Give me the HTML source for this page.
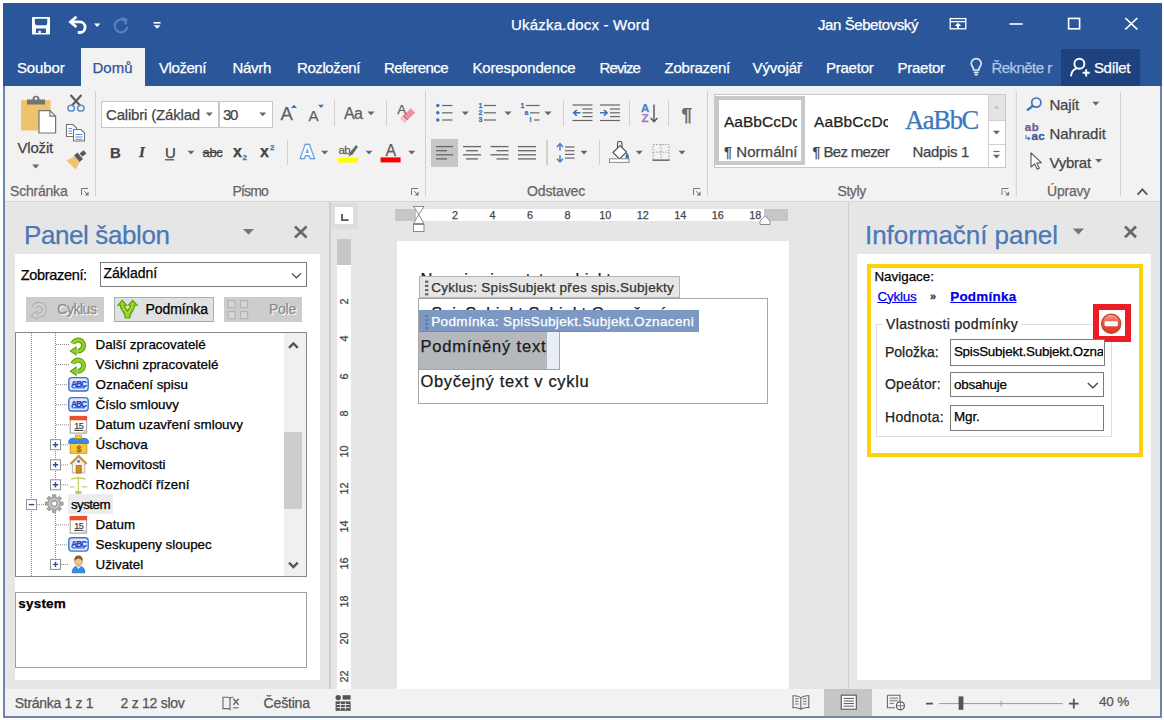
<!DOCTYPE html>
<html lang="cs"><head><meta charset="utf-8"><title>Ukázka.docx - Word</title>
<style>
html,body{margin:0;padding:0;background:#fff;}
body{width:1164px;height:720px;overflow:hidden;position:relative;font-family:"Liberation Sans",sans-serif;}
.a{position:absolute;box-sizing:border-box;}
.t{position:absolute;white-space:pre;-webkit-text-stroke:0.25px currentColor;}
svg{overflow:visible;}
</style></head>
<body>
<div class="a" style="left:3.2px;top:3px;width:1158.7px;height:714.7px;background:#6b85ad;"></div>
<div class="a" style="left:3.2px;top:3px;width:1158.7px;height:83px;background:#2b579a;"></div>
<div class="a" style="left:5.1px;top:86px;width:1154.9px;height:116px;background:#f2f2f2;"></div>
<div class="a" style="left:5.1px;top:201px;width:1154.9px;height:1px;background:#d6d6d6;"></div>
<div class="a" style="left:5.1px;top:202px;width:1154.9px;height:487px;background:#e6e6e6;"></div>
<div class="a" style="left:5.1px;top:689px;width:1154.9px;height:26.8px;background:#f2f2f2;"></div>
<div class="a" style="left:81px;top:48px;width:64px;height:38px;background:#f2f2f2;"></div>
<div class="a" style="left:1061px;top:48.5px;width:79px;height:37.5px;background:#1d427d;"></div>
<svg class="a" style="left:0;top:0" width="1164" height="720" viewBox="0 0 1164 720">
<rect x="32" y="17" width="18" height="17.5" rx="1" fill="#fff"/><path d="M34.8,18.8 H47.3 V23 L46.4,25.2 H35.9 L34.8,23 Z" fill="#2b579a"/><path d="M35.9,28.6 H45.9 V32.9 H40.8 V30.8 H38.3 V32.9 H35.9 Z" fill="#2b579a"/>
<g fill="none" stroke="#fff" stroke-width="2.8"><path d="M71,21.9 H79.8 A5.3,5.3 0 0 1 79.8,32.5 H77.8"/><path d="M76.4,16.8 L70.4,21.9 L76.4,27"/></g>
<polygon points="94,23.6 100.4,23.6 97.2,27" fill="#fff"/>
<g fill="none" stroke="#5d81c0" stroke-width="2.2"><path d="M125.2,21 A6.4,6.4 0 1 0 127.4,26.8"/><path d="M121.4,18.2 L126.2,19.6 L125.4,24.6" /></g>
<rect x="153.6" y="22" width="7" height="1.6" fill="#fff" />
<polygon points="153.6,25.2 160.6,25.2 157.1,28.8" fill="#fff"/>
<g fill="none" stroke="#fff" stroke-width="1.3"><rect x="950.2" y="18.6" width="15.6" height="10.2"/><line x1="950.2" y1="21.6" x2="965.8" y2="21.6"/></g>
<path d="M958,22.8 L961.2,26 H959 V28 H957 V26 H954.8 Z" fill="#fff"/>
<line x1="1009.5" y1="24" x2="1022.6" y2="24" stroke="#fff" stroke-width="1.6" />
<rect x="1068.6" y="18.4" width="11" height="10.4" fill="none" stroke="#fff" stroke-width="1.6" />
<path d="M1125.3,18 L1137.3,29.4 M1137.3,18 L1125.3,29.4" stroke="#fff" stroke-width="1.6" fill="none"/>
<g fill="none" stroke="#dfe7f4" stroke-width="1.7"><path d="M973.6,70 C973.6,67 971.2,66.2 971.2,63.6 A5,5 0 0 1 981.2,63.6 C981.2,66.2 978.8,67 978.8,70 Z"/><line x1="973.8" y1="72.4" x2="978.6" y2="72.4"/><line x1="974.6" y1="74.6" x2="977.8" y2="74.6"/></g>
<g fill="none" stroke="#fff" stroke-width="1.9"><circle cx="1079.4" cy="63.8" r="5"/><path d="M1071,76.4 C1071.4,71.6 1074,69.2 1076.6,68.4"/><path d="M1082.6,72.8 H1089.8 M1086.2,69.2 V76.4"/></g>
</svg>
<span class="t" style="left:511px;top:16.90px;font:15px/1 'Liberation Sans',sans-serif;color:#ffffff;letter-spacing:0.207px;">Ukázka.docx - Word</span>
<span class="t" style="left:818px;top:17.00px;font:15px/1 'Liberation Sans',sans-serif;color:#ffffff;letter-spacing:-0.421px;">Jan Šebetovský</span>
<span class="t" style="left:17px;top:59.90px;font:15px/1 'Liberation Sans',sans-serif;color:#ffffff;letter-spacing:-0.145px;">Soubor</span>
<span class="t" style="left:92.5px;top:59.90px;font:15px/1 'Liberation Sans',sans-serif;color:#2b579a;letter-spacing:-0.003px;">Domů</span>
<span class="t" style="left:159px;top:59.90px;font:15px/1 'Liberation Sans',sans-serif;color:#ffffff;letter-spacing:-0.433px;">Vložení</span>
<span class="t" style="left:232.5px;top:59.90px;font:15px/1 'Liberation Sans',sans-serif;color:#ffffff;letter-spacing:-0.303px;">Návrh</span>
<span class="t" style="left:297px;top:59.90px;font:15px/1 'Liberation Sans',sans-serif;color:#ffffff;letter-spacing:-0.411px;">Rozložení</span>
<span class="t" style="left:384px;top:59.90px;font:15px/1 'Liberation Sans',sans-serif;color:#ffffff;letter-spacing:-0.579px;">Reference</span>
<span class="t" style="left:472.5px;top:59.90px;font:15px/1 'Liberation Sans',sans-serif;color:#ffffff;letter-spacing:-0.160px;">Korespondence</span>
<span class="t" style="left:599.5px;top:59.90px;font:15px/1 'Liberation Sans',sans-serif;color:#ffffff;letter-spacing:-0.892px;">Revize</span>
<span class="t" style="left:664.5px;top:59.90px;font:15px/1 'Liberation Sans',sans-serif;color:#ffffff;letter-spacing:-0.226px;">Zobrazení</span>
<span class="t" style="left:752.5px;top:59.90px;font:15px/1 'Liberation Sans',sans-serif;color:#ffffff;letter-spacing:-0.074px;">Vývojář</span>
<span class="t" style="left:826px;top:59.90px;font:15px/1 'Liberation Sans',sans-serif;color:#ffffff;letter-spacing:-0.241px;">Praetor</span>
<span class="t" style="left:897.6px;top:59.90px;font:15px/1 'Liberation Sans',sans-serif;color:#ffffff;letter-spacing:-0.284px;">Praetor</span>
<span class="t" style="left:991.4px;top:59.90px;font:15px/1 'Liberation Sans',sans-serif;color:#b5c6e3;letter-spacing:-0.526px;">Řekněte r</span>
<span class="t" style="left:1094px;top:59.90px;font:15px/1 'Liberation Sans',sans-serif;color:#ffffff;letter-spacing:-0.393px;">Sdílet</span>
<div class="a" style="left:101px;top:101px;width:117.5px;height:26.5px;background:#fff;border:1px solid #c6c6c6;"></div>
<div class="a" style="left:218.5px;top:101px;width:54px;height:26.5px;background:#fff;border:1px solid #c6c6c6;"></div>
<div class="a" style="left:431px;top:139px;width:27px;height:28px;background:#c6c6c6;"></div>
<div class="a" style="left:714px;top:94px;width:292px;height:74px;background:#fff;border:1px solid #c8c8c8;"></div>
<div class="a" style="left:715.4px;top:95.8px;width:90px;height:69.6px;background:#fff;border:4.6px solid #c8c8c8;"></div>
<div class="a" style="left:988px;top:95px;width:17px;height:25px;background:#e4e4e4;"></div>
<div class="a" style="left:987.5px;top:95px;width:1px;height:72px;background:#d0d0d0;"></div>
<div class="a" style="left:988px;top:120px;width:17px;height:1px;background:#d0d0d0;"></div>
<div class="a" style="left:988px;top:144px;width:17px;height:1px;background:#d0d0d0;"></div>
<svg class="a" style="left:0;top:0" width="1164" height="720" viewBox="0 0 1164 720">
<line x1="95.5" y1="91" x2="95.5" y2="196" stroke="#d0d0d0" stroke-width="1" />
<line x1="425.5" y1="91" x2="425.5" y2="196" stroke="#d0d0d0" stroke-width="1" />
<line x1="707.5" y1="91" x2="707.5" y2="196" stroke="#d0d0d0" stroke-width="1" />
<line x1="1016.3" y1="91" x2="1016.3" y2="196" stroke="#d0d0d0" stroke-width="1" />
<line x1="1120.5" y1="92" x2="1120.5" y2="196" stroke="#d0d0d0" stroke-width="1" />
<line x1="334.5" y1="100" x2="334.5" y2="126" stroke="#d0d0d0" stroke-width="1" />
<line x1="386.5" y1="100" x2="386.5" y2="126" stroke="#d0d0d0" stroke-width="1" />
<line x1="563.5" y1="100" x2="563.5" y2="126" stroke="#d0d0d0" stroke-width="1" />
<line x1="629.5" y1="100" x2="629.5" y2="126" stroke="#d0d0d0" stroke-width="1" />
<line x1="668.5" y1="100" x2="668.5" y2="126" stroke="#d0d0d0" stroke-width="1" />
<line x1="287.5" y1="140" x2="287.5" y2="165" stroke="#d0d0d0" stroke-width="1" />
<line x1="547.5" y1="140" x2="547.5" y2="165" stroke="#d0d0d0" stroke-width="1" />
<line x1="546.5" y1="140" x2="546.5" y2="165" stroke="#d0d0d0" stroke-width="1" />
<line x1="599.5" y1="140" x2="599.5" y2="165" stroke="#d0d0d0" stroke-width="1" />
<g fill="none" stroke="#777" stroke-width="1"><path d="M81.5,195 V188.5 H88"/><path d="M84.2,191.2 L88,195"/></g><path d="M88.6,191.6 V195.6 H84.6 Z" fill="#777"/>
<g fill="none" stroke="#777" stroke-width="1"><path d="M411.5,195 V188.5 H418"/><path d="M414.2,191.2 L418,195"/></g><path d="M418.6,191.6 V195.6 H414.6 Z" fill="#777"/>
<g fill="none" stroke="#777" stroke-width="1"><path d="M693.5,195 V188.5 H700"/><path d="M696.2,191.2 L700,195"/></g><path d="M700.6,191.6 V195.6 H696.6 Z" fill="#777"/>
<g fill="none" stroke="#777" stroke-width="1"><path d="M1002.0,195 V188.5 H1008.5"/><path d="M1004.7,191.2 L1008.5,195"/></g><path d="M1009.1,191.6 V195.6 H1005.1 Z" fill="#777"/>
<rect x="21" y="100" width="29.6" height="30.4" rx="1.5" fill="#eec36d"/>
<path d="M27,104.4 V99.4 H32.4 A3.6,3.6 0 0 1 39.6,99.4 H45 V104.4 Z" fill="#737373"/><circle cx="36" cy="98.6" r="1.4" fill="#f2f2f2"/>
<path d="M39,110.6 H50 L55.6,116.2 V133 H39 Z" fill="#fff" stroke="#737373" stroke-width="1.2"/><path d="M50,110.6 V116.2 H55.6" fill="none" stroke="#737373" stroke-width="1.2"/>
<polygon points="32.2,164.6 39.2,164.6 35.7,168.4" fill="#666666"/>
<path d="M70.6,95 L80.4,106 M81.4,95 L71.6,106" fill="none" stroke="#595959" stroke-width="2.1"/><g fill="none" stroke="#5b8fd0" stroke-width="1.5"><ellipse cx="71.2" cy="108.2" rx="3.3" ry="2.9"/><ellipse cx="80.8" cy="108.2" rx="3.3" ry="2.9"/></g>
<g fill="#fff" stroke="#737373" stroke-width="1.1"><path d="M66.5,124.5 H73 L76.5,128 V136.5 H66.5 Z"/><path d="M73.5,129.5 H81 L84.5,133 V141 H73.5 Z"/></g><g stroke="#5b8fd0" stroke-width="1"><path d="M68.5,128.5 H72 M68.5,131 H72 M68.5,133.5 H72 M75.5,134.5 H82.5 M75.5,137 H82.5 M75.5,139.3 H82.5"/></g>
<path d="M66.4,160.6 L74.6,156.4 L79.6,162.6 L75.6,169.6 Z" fill="#eec36d"/><path d="M74,155.4 L77.4,152.4 L83,159 L79.6,162 Z" fill="#595959"/><path d="M79.6,153.4 L83.6,150.2 L86.4,153.4 L82.4,156.8 Z" fill="#595959"/>
<polygon points="205.8,112.4 212.8,112.4 209.3,116.2" fill="#666666"/>
<polygon points="259.3,112.4 266.3,112.4 262.8,116.2" fill="#666666"/>
<polygon points="291,108 297,108 294,104.8" fill="#3c72b8"/><polygon points="318,104.8 324,104.8 321,108" fill="#3c72b8"/>
<polygon points="367.5,111.4 374.5,111.4 371,115.2" fill="#666666"/>
<path d="M400.4,118.3 L410.9,108.3 L415.1,112.7 L404.6,122.7 Z" fill="#ee92a0"/><path d="M400.4,118.3 L402.9,115.9 L407.1,120.3 L404.6,122.7 Z" fill="#f6bfc8"/><path d="M402.9,115.9 L403.8,115 L408,119.4 L407.1,120.3 Z" fill="#e2677b"/>
<polygon points="187.5,150.7 194.5,150.7 191,154.5" fill="#666666"/>
<polygon points="321.2,150.7 328.2,150.7 324.7,154.5" fill="#666666"/>
<polygon points="365.5,150.7 372.5,150.7 369,154.5" fill="#666666"/>
<polygon points="408.2,150.7 415.2,150.7 411.7,154.5" fill="#666666"/>
<line x1="165" y1="159.8" x2="174" y2="159.8" stroke="#444" stroke-width="1.2" />
<rect x="338" y="157.8" width="20" height="4.8" fill="#ffff00" />
<path d="M348.5,156.5 L350,152.5 L356,145 L358,146.8 L352.5,154.5 Z" fill="#666"/>
<rect x="380.6" y="157.4" width="20" height="5" fill="#f40000" />
<circle cx="437.8" cy="105.5" r="1.7" fill="#3c72b8"/>
<line x1="442" y1="105.5" x2="452.5" y2="105.5" stroke="#666" stroke-width="1.2" />
<circle cx="437.8" cy="112.8" r="1.7" fill="#3c72b8"/>
<line x1="442" y1="112.8" x2="452.5" y2="112.8" stroke="#666" stroke-width="1.2" />
<circle cx="437.8" cy="120" r="1.7" fill="#3c72b8"/>
<line x1="442" y1="120" x2="452.5" y2="120" stroke="#666" stroke-width="1.2" />
<polygon points="461.8,111.4 468.8,111.4 465.3,115.2" fill="#666666"/>
<line x1="484" y1="105.5" x2="496" y2="105.5" stroke="#666" stroke-width="1.2" />
<line x1="484" y1="112.8" x2="496" y2="112.8" stroke="#666" stroke-width="1.2" />
<line x1="484" y1="120" x2="496" y2="120" stroke="#666" stroke-width="1.2" />
<polygon points="504.5,111.4 511.5,111.4 508,115.2" fill="#666666"/>
<line x1="526" y1="105.5" x2="539.5" y2="105.5" stroke="#666" stroke-width="1.2" />
<line x1="530" y1="112.8" x2="539.5" y2="112.8" stroke="#666" stroke-width="1.2" />
<line x1="534" y1="120" x2="539.5" y2="120" stroke="#666" stroke-width="1.2" />
<polygon points="544.5,111.4 551.5,111.4 548,115.2" fill="#666666"/>
<line x1="572.5" y1="105" x2="592.5" y2="105" stroke="#666" stroke-width="1.2" />
<line x1="572.5" y1="120.5" x2="592.5" y2="120.5" stroke="#666" stroke-width="1.2" />
<line x1="582.5" y1="109" x2="592.5" y2="109" stroke="#666" stroke-width="1.2" />
<line x1="582.5" y1="112.8" x2="592.5" y2="112.8" stroke="#666" stroke-width="1.2" />
<line x1="582.5" y1="116.6" x2="592.5" y2="116.6" stroke="#666" stroke-width="1.2" />
<path d="M580.5,112.8 H574.0 M576.8,110 L573.7,112.8 L576.8,115.6" fill="none" stroke="#3c72b8" stroke-width="1.6"/>
<line x1="600" y1="105" x2="620" y2="105" stroke="#666" stroke-width="1.2" />
<line x1="600" y1="120.5" x2="620" y2="120.5" stroke="#666" stroke-width="1.2" />
<line x1="610" y1="109" x2="620" y2="109" stroke="#666" stroke-width="1.2" />
<line x1="610" y1="112.8" x2="620" y2="112.8" stroke="#666" stroke-width="1.2" />
<line x1="610" y1="116.6" x2="620" y2="116.6" stroke="#666" stroke-width="1.2" />
<path d="M600,112.8 H606.8 M604,110 L607.1,112.8 L604,115.6" fill="none" stroke="#3c72b8" stroke-width="1.6"/>
<path d="M654,104.5 V121.5 M650.6,118 L654,121.8 L657.4,118" fill="none" stroke="#555" stroke-width="1.4"/>
<line x1="436" y1="146.6" x2="453" y2="146.6" stroke="#666" stroke-width="1.3" />
<line x1="436" y1="150.7" x2="447" y2="150.7" stroke="#666" stroke-width="1.3" />
<line x1="436" y1="154.8" x2="453" y2="154.8" stroke="#666" stroke-width="1.3" />
<line x1="436" y1="158.9" x2="447" y2="158.9" stroke="#666" stroke-width="1.3" />
<line x1="463" y1="146.6" x2="481" y2="146.6" stroke="#666" stroke-width="1.3" />
<line x1="466" y1="150.7" x2="478" y2="150.7" stroke="#666" stroke-width="1.3" />
<line x1="463" y1="154.8" x2="481" y2="154.8" stroke="#666" stroke-width="1.3" />
<line x1="466" y1="158.9" x2="478" y2="158.9" stroke="#666" stroke-width="1.3" />
<line x1="490.5" y1="146.6" x2="508.5" y2="146.6" stroke="#666" stroke-width="1.3" />
<line x1="496.5" y1="150.7" x2="508.5" y2="150.7" stroke="#666" stroke-width="1.3" />
<line x1="490.5" y1="154.8" x2="508.5" y2="154.8" stroke="#666" stroke-width="1.3" />
<line x1="496.5" y1="158.9" x2="508.5" y2="158.9" stroke="#666" stroke-width="1.3" />
<line x1="518" y1="146.6" x2="536" y2="146.6" stroke="#666" stroke-width="1.3" />
<line x1="518" y1="150.7" x2="536" y2="150.7" stroke="#666" stroke-width="1.3" />
<line x1="518" y1="154.8" x2="536" y2="154.8" stroke="#666" stroke-width="1.3" />
<line x1="518" y1="158.9" x2="536" y2="158.9" stroke="#666" stroke-width="1.3" />
<line x1="565" y1="147" x2="574.5" y2="147" stroke="#666" stroke-width="1.2" />
<line x1="565" y1="150.7" x2="574.5" y2="150.7" stroke="#666" stroke-width="1.2" />
<line x1="565" y1="154.4" x2="574.5" y2="154.4" stroke="#666" stroke-width="1.2" />
<line x1="565" y1="158.1" x2="574.5" y2="158.1" stroke="#666" stroke-width="1.2" />
<path d="M560,143.8 V150.4 M557,146.9 L560,143.6 L563,146.9 M560,155.2 V161.8 M557,158.7 L560,162 L563,158.7" fill="none" stroke="#4a82c8" stroke-width="1.5"/>
<polygon points="580.5,150.7 587.5,150.7 584,154.5" fill="#666666"/>
<path d="M613,152.5 L620,145.5 L626.5,152 L619.5,159 Z" fill="#fff" stroke="#555" stroke-width="1.2"/><path d="M617.5,148 V143.5 A2.2,2.2 0 0 1 622,143.5 V148" fill="none" stroke="#555" stroke-width="1.1"/><path d="M626.5,152 C628.5,154.5 629.3,156 629,157.6 A1.7,1.7 0 0 1 625.6,157.4 C625.5,156 626,154.5 626.5,152 Z" fill="#3c72b8"/>
<rect x="609.5" y="158.8" width="19.5" height="3.6" fill="#fff" stroke="#8a8a8a" stroke-width="1" />
<polygon points="635.7,150.7 642.7,150.7 639.2,154.5" fill="#666666"/>
<g fill="none" stroke="#9a9a9a" stroke-width="1" stroke-dasharray="1.5 1.5"><rect x="653" y="144.5" width="16" height="15.5"/><line x1="661" y1="144.5" x2="661" y2="160"/><line x1="653" y1="152.2" x2="669" y2="152.2"/></g>
<line x1="652.5" y1="160.2" x2="669.5" y2="160.2" stroke="#666" stroke-width="1.4" />
<polygon points="678.5,150.7 685.5,150.7 682,154.5" fill="#666666"/>
<polygon points="993.5,108.6 999.5,108.6 996.5,105.4" fill="#bdbdbd"/>
<polygon points="993,130.7 1000,130.7 996.5,134.5" fill="#666666"/>
<line x1="993.5" y1="151.5" x2="999.5" y2="151.5" stroke="#666666" stroke-width="1.2" />
<polygon points="993,154.7 1000,154.7 996.5,158.5" fill="#666666"/>
<circle cx="1036.3" cy="102.6" r="4.6" fill="none" stroke="#3c72b8" stroke-width="1.7"/><line x1="1032.8" y1="106" x2="1027" y2="110.4" stroke="#3c72b8" stroke-width="2.2"/>
<polygon points="1092.3,101.7 1099.3,101.7 1095.8,105.5" fill="#666666"/>
<path d="M1026,135 V138.4 H1029.6 M1028,136.8 L1029.9,138.4 L1028,140" fill="none" stroke="#4a82c8" stroke-width="1.1"/>
<path d="M1031,152.8 V167 L1034.6,163.8 L1037.2,169.2 L1039.3,168.2 L1036.8,163 L1041.3,162.6 Z" fill="#fff" stroke="#555" stroke-width="1.1" stroke-linejoin="round"/>
<polygon points="1095.1,158.9 1102.1,158.9 1098.6,162.7" fill="#666666"/>
<path d="M1137.6,194.6 L1142.4,189.4 L1147.2,194.6" fill="none" stroke="#555" stroke-width="1.8"/>
</svg>
<span class="t" style="left:17.5px;top:139.90px;font:15px/1 'Liberation Sans',sans-serif;color:#444444;letter-spacing:-0.197px;">Vložit</span>
<span class="t" style="left:10px;top:184.15px;font:14px/1 'Liberation Sans',sans-serif;color:#666666;letter-spacing:-0.206px;">Schránka</span>
<span class="t" style="left:232.5px;top:184.15px;font:14px/1 'Liberation Sans',sans-serif;color:#666666;letter-spacing:-0.835px;">Písmo</span>
<span class="t" style="left:527px;top:184.15px;font:14px/1 'Liberation Sans',sans-serif;color:#666666;letter-spacing:-0.142px;">Odstavec</span>
<span class="t" style="left:837.5px;top:183.95px;font:14px/1 'Liberation Sans',sans-serif;color:#666666;letter-spacing:-0.428px;">Styly</span>
<span class="t" style="left:1047px;top:183.95px;font:14px/1 'Liberation Sans',sans-serif;color:#666666;letter-spacing:-0.224px;">Úpravy</span>
<span class="t" style="left:106px;top:107.30px;font:15px/1 'Liberation Sans',sans-serif;color:#444444;letter-spacing:-0.180px;">Calibri (Základ</span>
<span class="t" style="left:223px;top:107.30px;font:15px/1 'Liberation Sans',sans-serif;color:#444444;letter-spacing:-1.342px;">30</span>
<span class="t" style="left:110px;top:144.90px;font:bold 15px/1 'Liberation Sans',sans-serif;color:#444444;">B</span>
<span class="t" style="left:139px;top:145.04px;font:italic bold 15px/1 'Liberation Serif',serif;color:#444444;">I</span>
<span class="t" style="left:165px;top:144.50px;font:15px/1 'Liberation Sans',sans-serif;color:#444444;">U</span>
<span class="t" style="left:202.5px;top:146.40px;font:13px/1 'Liberation Sans',sans-serif;color:#444444;letter-spacing:-0.320px;text-decoration:line-through;">abc</span>
<span class="t" style="left:233px;top:144.06px;font:bold 16px/1 'Liberation Sans',sans-serif;color:#444444;">x</span>
<span class="t" style="left:242.5px;top:153.63px;font:bold 8px/1 'Liberation Sans',sans-serif;color:#3c72b8;">2</span>
<span class="t" style="left:260px;top:144.06px;font:bold 16px/1 'Liberation Sans',sans-serif;color:#444444;">x</span>
<span class="t" style="left:270px;top:144.43px;font:bold 8px/1 'Liberation Sans',sans-serif;color:#3c72b8;">2</span>
<span class="t" style="left:280.6px;top:105.34px;font:18.5px/1 'Liberation Sans',sans-serif;color:#5e5e5e;">A</span>
<span class="t" style="left:308.6px;top:108.30px;font:15px/1 'Liberation Sans',sans-serif;color:#5e5e5e;">A</span>
<span class="t" style="left:344px;top:106.06px;font:16px/1 'Liberation Sans',sans-serif;color:#5e5e5e;letter-spacing:-0.785px;">Aa</span>
<span class="t" style="left:338.6px;top:144.67px;font:11.5px/1 'Liberation Sans',sans-serif;color:#5e5e5e;letter-spacing:-0.696px;">ab</span>
<span class="t" style="left:385.4px;top:143.26px;font:16px/1 'Liberation Sans',sans-serif;color:#5e5e5e;">A</span>
<span class="t" style="left:397.2px;top:103.26px;font:13.4px/1 'Liberation Sans',sans-serif;color:#5e5e5e;">A</span>
<span class="t" style="left:300.4px;top:142.94px;font:bold 18.5px/1 'Liberation Sans',sans-serif;color:#ffffff;-webkit-text-stroke:2.4px #4f8fdc;paint-order:stroke fill;text-shadow:0 0 2px #8fbcf0;">A</span>
<span class="t" style="left:478.4px;top:101.87px;font:bold 7px/1 'Liberation Sans',sans-serif;color:#3c72b8;">1</span>
<span class="t" style="left:478.4px;top:109.17px;font:bold 7px/1 'Liberation Sans',sans-serif;color:#3c72b8;">2</span>
<span class="t" style="left:478.4px;top:116.37px;font:bold 7px/1 'Liberation Sans',sans-serif;color:#3c72b8;">3</span>
<span class="t" style="left:520.5px;top:101.87px;font:bold 7px/1 'Liberation Sans',sans-serif;color:#3c72b8;">1</span>
<span class="t" style="left:524.6px;top:109.17px;font:bold 7px/1 'Liberation Sans',sans-serif;color:#3c72b8;">a</span>
<span class="t" style="left:529.6px;top:116.37px;font:bold 7px/1 'Liberation Sans',sans-serif;color:#3c72b8;">i</span>
<span class="t" style="left:641px;top:103.07px;font:bold 11.5px/1 'Liberation Sans',sans-serif;color:#4a82c8;">A</span>
<span class="t" style="left:641.6px;top:112.87px;font:bold 11.5px/1 'Liberation Sans',sans-serif;color:#b06fd0;">Z</span>
<span class="t" style="left:681.4px;top:104.72px;font:bold 19px/1 'Liberation Sans',sans-serif;color:#6a6a6a;">¶</span>
<span class="t" style="left:724px;top:113.68px;font:15.5px/1 'Liberation Sans',sans-serif;color:#222;letter-spacing:0.024px;width:73px;overflow:hidden;">AaBbCcDc</span>
<span class="t" style="left:724px;top:144.30px;font:15px/1 'Liberation Sans',sans-serif;color:#444444;letter-spacing:0.043px;">¶ Normální</span>
<span class="t" style="left:814px;top:113.68px;font:15.5px/1 'Liberation Sans',sans-serif;color:#222;letter-spacing:0.087px;width:73.5px;overflow:hidden;">AaBbCcDc</span>
<span class="t" style="left:812.5px;top:144.00px;font:15px/1 'Liberation Sans',sans-serif;color:#444444;letter-spacing:-0.674px;">¶ Bez mezer</span>
<span class="t" style="left:905px;top:107.21px;font:26.5px/1 'Liberation Serif',serif;color:#3b78bd;letter-spacing:-1.300px;">AaBbC</span>
<span class="t" style="left:912.5px;top:144.00px;font:15px/1 'Liberation Sans',sans-serif;color:#444444;letter-spacing:-0.338px;">Nadpis 1</span>
<span class="t" style="left:1049.5px;top:97.10px;font:15px/1 'Liberation Sans',sans-serif;color:#444444;letter-spacing:-0.268px;">Najít</span>
<span class="t" style="left:1024.8px;top:122.17px;font:bold 11.5px/1 'Liberation Sans',sans-serif;color:#76569a;letter-spacing:0.540px;">ab</span>
<span class="t" style="left:1031.6px;top:131.17px;font:bold 11.5px/1 'Liberation Sans',sans-serif;color:#2f5597;letter-spacing:0.304px;">ac</span>
<span class="t" style="left:1049.5px;top:126.10px;font:15px/1 'Liberation Sans',sans-serif;color:#444444;letter-spacing:-0.050px;">Nahradit</span>
<span class="t" style="left:1049.5px;top:154.80px;font:15px/1 'Liberation Sans',sans-serif;color:#444444;letter-spacing:-0.249px;">Vybrat</span>
<div class="a" style="left:329.4px;top:202px;width:1.2px;height:487px;background:#cfcfcf;"></div>
<div class="a" style="left:14.8px;top:253.8px;width:305.7px;height:426.4px;background:#fff;"></div>
<span class="t" style="left:24px;top:221.99px;font:26px/1 'Liberation Sans',sans-serif;color:#4a78b8;letter-spacing:-0.403px;">Panel šablon</span>
<span class="t" style="left:20.8px;top:268.13px;font:14.5px/1 'Liberation Sans',sans-serif;color:#000;letter-spacing:-0.331px;">Zobrazení:</span>
<div class="a" style="left:100px;top:262px;width:306.5px;height:25px;background:#fff;border:1px solid #7a7a7a;width:206.5px;"></div>
<span class="t" style="left:103.6px;top:266.15px;font:14px/1 'Liberation Sans',sans-serif;color:#000;letter-spacing:-0.037px;">Základní</span>
<div class="a" style="left:26px;top:296.6px;width:77.8px;height:25.8px;background:#cccccc;"></div>
<div class="a" style="left:113.6px;top:296.6px;width:100.2px;height:25.8px;background:#e1e1e1;border:1px solid #adadad;"></div>
<div class="a" style="left:223.8px;top:296.6px;width:78px;height:25.8px;background:#cccccc;"></div>
<span class="t" style="left:58.3px;top:302.55px;font:14px/1 'Liberation Sans',sans-serif;color:#ffffff;letter-spacing:-0.484px;">Cyklus</span>
<span class="t" style="left:57.3px;top:301.55px;font:14px/1 'Liberation Sans',sans-serif;color:#8a8a8a;letter-spacing:-0.484px;">Cyklus</span>
<span class="t" style="left:145.5px;top:301.55px;font:14px/1 'Liberation Sans',sans-serif;color:#000;letter-spacing:-0.067px;">Podmínka</span>
<span class="t" style="left:270px;top:302.55px;font:14px/1 'Liberation Sans',sans-serif;color:#ffffff;letter-spacing:-0.255px;">Pole</span>
<span class="t" style="left:269px;top:301.55px;font:14px/1 'Liberation Sans',sans-serif;color:#8a8a8a;letter-spacing:-0.255px;">Pole</span>
<div class="a" style="left:15px;top:331.6px;width:292px;height:245.4px;background:#fff;border:1px solid #828790;"></div>
<div class="a" style="left:284px;top:332.6px;width:22px;height:243.4px;background:#f0f0f0;"></div>
<div class="a" style="left:284px;top:431.8px;width:18px;height:77.4px;background:#cdcdcd;"></div>
<div class="a" style="left:68.4px;top:494.4px;width:45px;height:20px;background:#ececec;"></div>
<div class="a" style="left:15px;top:591.6px;width:292px;height:76.8px;background:#fff;border:1px solid #a0a0a0;"></div>
<span class="t" style="left:18.3px;top:596.57px;font:bold 13.5px/1 'Liberation Sans',sans-serif;color:#000;letter-spacing:0.195px;">system</span>
<svg class="a" style="left:0;top:0" width="1164" height="720" viewBox="0 0 1164 720">
<polygon points="243,229 254,229 248.5,234.8" fill="#777"/>
<path d="M295,226.6 L306.6,237.6 M306.6,226.6 L295,237.6" stroke="#6a6a6a" stroke-width="2.8" fill="none"/>
<path d="M291.8,273.4 L296.4,277.8 L301,273.4" fill="none" stroke="#444" stroke-width="1.2"/>
<path d="M289,347.8 L293.4,343.4 L297.8,347.8" fill="none" stroke="#555" stroke-width="2.4"/>
<path d="M289,562.6 L293.4,567 L297.8,562.6" fill="none" stroke="#555" stroke-width="2.4"/>
<line x1="31.5" y1="333" x2="31.5" y2="499" stroke="#8c8c8c" stroke-width="1" stroke-dasharray="1 1"/>
<line x1="31.5" y1="511" x2="31.5" y2="576" stroke="#8c8c8c" stroke-width="1" stroke-dasharray="1 1"/>
<line x1="55.5" y1="333" x2="55.5" y2="440" stroke="#8c8c8c" stroke-width="1" stroke-dasharray="1 1"/>
<line x1="55.5" y1="451" x2="55.5" y2="460" stroke="#8c8c8c" stroke-width="1" stroke-dasharray="1 1"/>
<line x1="55.5" y1="471" x2="55.5" y2="480" stroke="#8c8c8c" stroke-width="1" stroke-dasharray="1 1"/>
<line x1="55.5" y1="513" x2="55.5" y2="563" stroke="#8c8c8c" stroke-width="1" stroke-dasharray="1 1"/>
<line x1="56" y1="344.5" x2="69" y2="344.5" stroke="#8c8c8c" stroke-width="1" stroke-dasharray="1 1"/>
<g transform="translate(0,3.3)"><path d="M72.9,340.3 A5.5,5.5 0 1 1 77.5,347.7" fill="none" stroke="#5a9f12" stroke-width="5"/><path d="M69.4,347.8 L76.6,342.6 V352.8 Z" fill="#5a9f12"/><path d="M72.9,340.3 A5.5,5.5 0 1 1 77.5,347.7" fill="none" stroke="#98d41f" stroke-width="2.8"/><path d="M71.4,347.8 L75.8,344.8 V350.8 Z" fill="#98d41f"/></g>
<line x1="56" y1="364.6" x2="69" y2="364.6" stroke="#8c8c8c" stroke-width="1" stroke-dasharray="1 1"/>
<g transform="translate(0,23.4)"><path d="M72.9,340.3 A5.5,5.5 0 1 1 77.5,347.7" fill="none" stroke="#5a9f12" stroke-width="5"/><path d="M69.4,347.8 L76.6,342.6 V352.8 Z" fill="#5a9f12"/><path d="M72.9,340.3 A5.5,5.5 0 1 1 77.5,347.7" fill="none" stroke="#98d41f" stroke-width="2.8"/><path d="M71.4,347.8 L75.8,344.8 V350.8 Z" fill="#98d41f"/></g>
<line x1="56" y1="384.7" x2="69" y2="384.7" stroke="#8c8c8c" stroke-width="1" stroke-dasharray="1 1"/>
<rect x="68.8" y="377.6" width="19.4" height="13.4" fill="#d9e8fb" stroke="#3f74c6" stroke-width="1.4" rx="3" />
<line x1="72" y1="387.8" x2="85" y2="387.8" stroke="#2a50c8" stroke-width="1" />
<line x1="56" y1="404.7" x2="69" y2="404.7" stroke="#8c8c8c" stroke-width="1" stroke-dasharray="1 1"/>
<rect x="68.8" y="397.6" width="19.4" height="13.4" fill="#d9e8fb" stroke="#3f74c6" stroke-width="1.4" rx="3" />
<line x1="72" y1="407.8" x2="85" y2="407.8" stroke="#2a50c8" stroke-width="1" />
<line x1="56" y1="424.8" x2="69" y2="424.8" stroke="#8c8c8c" stroke-width="1" stroke-dasharray="1 1"/>
<rect x="70.2" y="416.7" width="16.4" height="16.4" fill="#fff" stroke="#9a9a9a" stroke-width="1" />
<rect x="69.7" y="415.9" width="17.4" height="4.4" fill="#e8502e" />
<path d="M82,433.1 H86.6 V428.5 Z" fill="#c9c9c9"/>
<line x1="61" y1="444.8" x2="69" y2="444.8" stroke="#8c8c8c" stroke-width="1" stroke-dasharray="1 1"/>
<rect x="50.5" y="439.7" width="10" height="10" fill="#fff" stroke="#919191" stroke-width="1" />
<path d="M52.8,444.7 H58.2 M55.5,442 V447.4" stroke="#2b4fa0" stroke-width="1.4"/>
<rect x="70.2" y="442.8" width="16.6" height="10.5" fill="#f7c93c" stroke="#d39b19" stroke-width="1" />
<path d="M68.6,443.3 Q68.6,438.5 72,438.3 H85 Q88.6,438.5 88.6,443.3 Z" fill="#3c8be0" stroke="#2a6fc4" stroke-width=".8"/>
<rect x="75.5" y="435.1" width="6" height="3.4" fill="#f7c93c" stroke="#d39b19" stroke-width="0.8" />
<line x1="61" y1="464.9" x2="69" y2="464.9" stroke="#8c8c8c" stroke-width="1" stroke-dasharray="1 1"/>
<rect x="50.5" y="459.8" width="10" height="10" fill="#fff" stroke="#919191" stroke-width="1" />
<path d="M52.8,464.8 H58.2 M55.5,462.1 V467.5" stroke="#2b4fa0" stroke-width="1.4"/>
<path d="M70.4,464 L78.6,455.8 L86.8,464" fill="#fff" stroke="#c7902c" stroke-width="1.8"/><path d="M72.4,463.6 V473 H84.8 V463.6 L78.6,457.8 Z" fill="#f6f2e8" stroke="#b5b0a5" stroke-width=".9"/>
<rect x="76.2" y="465.4" width="5" height="7.6" fill="#d98a1c" stroke="#a96410" stroke-width="0.8" />
<circle cx="78.6" cy="461.4" r="1.3" fill="#3c72b8"/>
<line x1="61" y1="484.9" x2="69" y2="484.9" stroke="#8c8c8c" stroke-width="1" stroke-dasharray="1 1"/>
<rect x="50.5" y="479.8" width="10" height="10" fill="#fff" stroke="#919191" stroke-width="1" />
<path d="M52.8,484.8 H58.2 M55.5,482.1 V487.5" stroke="#2b4fa0" stroke-width="1.4"/>
<g stroke="#c7cf6a" fill="none" stroke-width="1.3"><path d="M78.4,476.4 V491.4"/><path d="M71,479.2 Q78.4,476.8 85.8,479.2"/><path d="M69.8,486.8 H74.6 M82.2,486.8 H87"/></g><ellipse cx="78.4" cy="492.4" rx="3.4" ry="1.4" fill="#b9c253"/>
<line x1="37" y1="504.7" x2="45" y2="504.7" stroke="#8c8c8c" stroke-width="1" stroke-dasharray="1 1"/>
<rect x="26.5" y="499.6" width="10" height="10" fill="#fff" stroke="#919191" stroke-width="1" />
<path d="M28.8,504.6 H34.2" stroke="#2b4fa0" stroke-width="1.4"/>
<g transform="translate(54.2,503.6)"><path d="M6.18,-1.65 L8.87,-1.52 L8.87,1.52 L6.18,1.65 L5.54,3.21 L7.35,5.20 L5.20,7.35 L3.21,5.54 L1.65,6.18 L1.52,8.87 L-1.52,8.87 L-1.65,6.18 L-3.21,5.54 L-5.20,7.35 L-7.35,5.20 L-5.54,3.21 L-6.18,1.65 L-8.87,1.52 L-8.87,-1.52 L-6.18,-1.65 L-5.54,-3.21 L-7.35,-5.20 L-5.20,-7.35 L-3.21,-5.54 L-1.65,-6.18 L-1.52,-8.87 L1.52,-8.87 L1.65,-6.18 L3.21,-5.54 L5.20,-7.35 L7.35,-5.20 L5.54,-3.21 Z M2.6,0 A2.6,2.6 0 1 0 -2.6,0 A2.6,2.6 0 1 0 2.6,0 Z" fill="#a9a9a9" stroke="#8e8e8e" stroke-width=".8" fill-rule="evenodd" stroke-linejoin="round"/><circle r="4.6" fill="none" stroke="#c9c9c9" stroke-width="1.6"/></g>
<line x1="56" y1="524.8" x2="69" y2="524.8" stroke="#8c8c8c" stroke-width="1" stroke-dasharray="1 1"/>
<rect x="70.2" y="516.7" width="16.4" height="16.4" fill="#fff" stroke="#9a9a9a" stroke-width="1" />
<rect x="69.7" y="515.9" width="17.4" height="4.4" fill="#e8502e" />
<path d="M82,533.1 H86.6 V528.5 Z" fill="#c9c9c9"/>
<line x1="56" y1="544.8" x2="69" y2="544.8" stroke="#8c8c8c" stroke-width="1" stroke-dasharray="1 1"/>
<rect x="68.8" y="537.7" width="19.4" height="13.4" fill="#d9e8fb" stroke="#3f74c6" stroke-width="1.4" rx="3" />
<line x1="72" y1="547.9" x2="85" y2="547.9" stroke="#2a50c8" stroke-width="1" />
<line x1="61" y1="564.5" x2="69" y2="564.5" stroke="#8c8c8c" stroke-width="1" stroke-dasharray="1 1"/>
<rect x="50.5" y="559.4" width="10" height="10" fill="#fff" stroke="#919191" stroke-width="1" />
<path d="M52.8,564.4 H58.2 M55.5,561.7 V567.1" stroke="#2b4fa0" stroke-width="1.4"/>
<path d="M72.2,572.8 Q72.2,566 78.5,566 Q84.8,566 84.8,572.8 Z" fill="#3c8be0" stroke="#2a6fc4" stroke-width=".8"/><path d="M76,566.2 L78.5,569 L81,566.2 Z" fill="#e8f1fb"/><circle cx="78.5" cy="561.4" r="3.8" fill="#f1c48e" stroke="#b98a4e" stroke-width=".7"/><path d="M74.2,561 Q74,555.4 78.5,555.4 Q83,555.4 82.8,561 Q80.5,558.6 78.5,558.4 Q76.5,558.6 74.2,561 Z" fill="#8a5a2a"/>
<g transform="translate(-39.2,-32.4)"><path d="M72.9,340.3 A5.5,5.5 0 1 1 77.5,347.7" fill="none" stroke="#b0b0b0" stroke-width="5"/><path d="M69.4,347.8 L76.6,342.6 V352.8 Z" fill="#b0b0b0"/><path d="M72.9,340.3 A5.5,5.5 0 1 1 77.5,347.7" fill="none" stroke="#d2d2d2" stroke-width="2.6"/><path d="M71.4,347.8 L75.8,344.8 V350.8 Z" fill="#d2d2d2"/></g>
<g fill="none"><path d="M122.3,304.5 C122.3,311 127.5,310 127.5,318.4 M132.7,304.5 C132.7,311 127.5,310 127.5,318.4" stroke="#5a9f12" stroke-width="5.4"/><path d="M116.6,305.8 L122.3,299.6 L128,305.8 Z M127,305.8 L132.7,299.6 L138.4,305.8 Z" fill="#5a9f12"/><path d="M122.3,304.5 C122.3,311 127.5,310 127.5,317.6 M132.7,304.5 C132.7,311 127.5,310 127.5,317.6" stroke="#9cd824" stroke-width="2.8"/><path d="M119,304.8 L122.3,301.4 L125.6,304.8 Z M129.4,304.8 L132.7,301.4 L136,304.8 Z" fill="#9cd824"/></g>
<rect x="228.2" y="300.6" width="7" height="7" fill="#d6d6d6" stroke="#b4b4b4" stroke-width="1.2" />
<rect x="240.6" y="300.6" width="7" height="7" fill="#d6d6d6" stroke="#b4b4b4" stroke-width="1.2" />
<rect x="228.2" y="311.6" width="7" height="7" fill="#d6d6d6" stroke="#b4b4b4" stroke-width="1.2" />
<rect x="240.6" y="311.6" width="7" height="7" fill="#d6d6d6" stroke="#b4b4b4" stroke-width="1.2" />
</svg>
<span class="t" style="left:71px;top:380.09px;font:bold 8.4px/1 'Liberation Sans',sans-serif;color:#2040d0;letter-spacing:-1.066px;">ABC</span>
<span class="t" style="left:71px;top:400.09px;font:bold 8.4px/1 'Liberation Sans',sans-serif;color:#2040d0;letter-spacing:-1.066px;">ABC</span>
<span class="t" style="left:74.2px;top:422.48px;font:9px/1 'Liberation Sans',sans-serif;color:#444;letter-spacing:-0.405px;text-decoration:underline;">15</span>
<span class="t" style="left:76.6px;top:444.68px;font:bold 9px/1 'Liberation Sans',sans-serif;color:#a06a08;">$</span>
<span class="t" style="left:74.2px;top:522.48px;font:9px/1 'Liberation Sans',sans-serif;color:#444;letter-spacing:-0.405px;text-decoration:underline;">15</span>
<span class="t" style="left:71px;top:540.19px;font:bold 8.4px/1 'Liberation Sans',sans-serif;color:#2040d0;letter-spacing:-1.066px;">ABC</span>
<span class="t" style="left:95.6px;top:337.76px;font:13.4px/1 'Liberation Sans',sans-serif;color:#000;">Další zpracovatelé</span>
<span class="t" style="left:95.6px;top:357.86px;font:13.4px/1 'Liberation Sans',sans-serif;color:#000;">Všichni zpracovatelé</span>
<span class="t" style="left:95.6px;top:377.96px;font:13.4px/1 'Liberation Sans',sans-serif;color:#000;">Označení spisu</span>
<span class="t" style="left:95.6px;top:397.96px;font:13.4px/1 'Liberation Sans',sans-serif;color:#000;">Číslo smlouvy</span>
<span class="t" style="left:95.6px;top:418.06px;font:13.4px/1 'Liberation Sans',sans-serif;color:#000;">Datum uzavření smlouvy</span>
<span class="t" style="left:95.6px;top:438.06px;font:13.4px/1 'Liberation Sans',sans-serif;color:#000;">Úschova</span>
<span class="t" style="left:95.6px;top:458.16px;font:13.4px/1 'Liberation Sans',sans-serif;color:#000;">Nemovitosti</span>
<span class="t" style="left:95.6px;top:478.16px;font:13.4px/1 'Liberation Sans',sans-serif;color:#000;">Rozhodčí řízení</span>
<span class="t" style="left:71px;top:497.96px;font:13.4px/1 'Liberation Sans',sans-serif;color:#000;letter-spacing:-0.573px;">system</span>
<span class="t" style="left:95.6px;top:518.06px;font:13.4px/1 'Liberation Sans',sans-serif;color:#000;">Datum</span>
<span class="t" style="left:95.6px;top:538.06px;font:13.4px/1 'Liberation Sans',sans-serif;color:#000;">Seskupeny sloupec</span>
<span class="t" style="left:95.6px;top:557.76px;font:13.4px/1 'Liberation Sans',sans-serif;color:#000;">Uživatel</span>
<div class="a" style="left:331px;top:202.5px;width:27px;height:26.4px;background:#dddddd;"></div>
<div class="a" style="left:335.3px;top:207.2px;width:18px;height:16.7px;background:#fff;"></div>
<div class="a" style="left:394.5px;top:209px;width:21.5px;height:12px;background:#c6c6c6;"></div>
<div class="a" style="left:416px;top:209px;width:348px;height:12px;background:#fff;"></div>
<div class="a" style="left:764px;top:209px;width:23.5px;height:12px;background:#c6c6c6;"></div>
<div class="a" style="left:337px;top:239px;width:13.6px;height:26px;background:#c6c6c6;"></div>
<div class="a" style="left:337px;top:265px;width:13.6px;height:424px;background:#fff;"></div>
<div class="a" style="left:396.5px;top:241px;width:392.5px;height:448px;background:#fff;"></div>
<span class="t" style="left:451.997px;top:210.26px;font:10.8px/1 'Liberation Sans',sans-serif;color:#444;">2</span>
<span class="t" style="left:489.497px;top:210.26px;font:10.8px/1 'Liberation Sans',sans-serif;color:#444;">4</span>
<span class="t" style="left:526.997px;top:210.26px;font:10.8px/1 'Liberation Sans',sans-serif;color:#444;">6</span>
<span class="t" style="left:564.497px;top:210.26px;font:10.8px/1 'Liberation Sans',sans-serif;color:#444;">8</span>
<span class="t" style="left:599.194px;top:210.26px;font:10.8px/1 'Liberation Sans',sans-serif;color:#444;">10</span>
<span class="t" style="left:636.794px;top:210.26px;font:10.8px/1 'Liberation Sans',sans-serif;color:#444;">12</span>
<span class="t" style="left:674.294px;top:210.26px;font:10.8px/1 'Liberation Sans',sans-serif;color:#444;">14</span>
<span class="t" style="left:711.794px;top:210.26px;font:10.8px/1 'Liberation Sans',sans-serif;color:#444;">16</span>
<span class="t" style="left:749.294px;top:210.26px;font:10.8px/1 'Liberation Sans',sans-serif;color:#444;">18</span>
<span class="t" style="left:340.80px;top:295.60px;font:10.8px/1 'Liberation Sans',sans-serif;color:#444;transform:rotate(-90deg);transform-origin:50% 50%;">2</span>
<span class="t" style="left:340.80px;top:333.10px;font:10.8px/1 'Liberation Sans',sans-serif;color:#444;transform:rotate(-90deg);transform-origin:50% 50%;">4</span>
<span class="t" style="left:340.80px;top:370.60px;font:10.8px/1 'Liberation Sans',sans-serif;color:#444;transform:rotate(-90deg);transform-origin:50% 50%;">6</span>
<span class="t" style="left:340.80px;top:408.10px;font:10.8px/1 'Liberation Sans',sans-serif;color:#444;transform:rotate(-90deg);transform-origin:50% 50%;">8</span>
<span class="t" style="left:337.79px;top:445.60px;font:10.8px/1 'Liberation Sans',sans-serif;color:#444;transform:rotate(-90deg);transform-origin:50% 50%;">10</span>
<span class="t" style="left:337.79px;top:483.10px;font:10.8px/1 'Liberation Sans',sans-serif;color:#444;transform:rotate(-90deg);transform-origin:50% 50%;">12</span>
<span class="t" style="left:337.79px;top:520.60px;font:10.8px/1 'Liberation Sans',sans-serif;color:#444;transform:rotate(-90deg);transform-origin:50% 50%;">14</span>
<span class="t" style="left:337.79px;top:558.10px;font:10.8px/1 'Liberation Sans',sans-serif;color:#444;transform:rotate(-90deg);transform-origin:50% 50%;">16</span>
<span class="t" style="left:337.79px;top:595.60px;font:10.8px/1 'Liberation Sans',sans-serif;color:#444;transform:rotate(-90deg);transform-origin:50% 50%;">18</span>
<span class="t" style="left:337.79px;top:633.10px;font:10.8px/1 'Liberation Sans',sans-serif;color:#444;transform:rotate(-90deg);transform-origin:50% 50%;">20</span>
<span class="t" style="left:337.79px;top:670.60px;font:10.8px/1 'Liberation Sans',sans-serif;color:#444;transform:rotate(-90deg);transform-origin:50% 50%;">22</span>
<span class="t" style="left:420.4px;top:270.63px;font:16.5px/1 'Liberation Sans',sans-serif;color:#1a1a1a;letter-spacing:0.131px;">Na spise jsou tyto subjekty:</span>
<div class="a" style="left:418.4px;top:297.6px;width:349.6px;height:106.2px;background:#fff;border:1px solid #a6a6a6;"></div>
<span class="t" style="left:421.6px;top:304.53px;font:16.5px/1 'Liberation Sans',sans-serif;color:#1a1a1a;letter-spacing:0.453px;">«SpisSubjekt.Subjekt.Označení»</span>
<div class="a" style="left:418.9px;top:276.4px;width:261.1px;height:21.7px;background:#e6e6e6;border:1px solid #b4b4b4;"></div>
<span class="t" style="left:431.2px;top:280.77px;font:13.5px/1 'Liberation Sans',sans-serif;color:#333;letter-spacing:0.268px;">Cyklus: SpisSubjekt přes spis.Subjekty</span>
<div class="a" style="left:418.9px;top:331.6px;width:141.5px;height:38.2px;background:#e9edf5;border:1px solid #a6a6a6;border-left:none;border-top:none;"></div>
<div class="a" style="left:418.9px;top:331.6px;width:128.4px;height:37px;background:#b4b8bd;"></div>
<div class="a" style="left:418.9px;top:310.2px;width:280.1px;height:21.6px;background:#7d99c3;"></div>
<div class="a" style="left:418.9px;top:330.8px;width:181.5px;height:1.4px;background:#6c88b4;"></div>
<span class="t" style="left:431.2px;top:314.97px;font:13.5px/1 'Liberation Sans',sans-serif;color:#fff;letter-spacing:0.360px;">Podmínka: SpisSubjekt.Subjekt.Oznaceni</span>
<span class="t" style="left:420.4px;top:338.33px;font:16.5px/1 'Liberation Sans',sans-serif;color:#1a1a1a;letter-spacing:0.811px;">Podmíněný text</span>
<span class="t" style="left:420.4px;top:372.63px;font:16.5px/1 'Liberation Sans',sans-serif;color:#1a1a1a;letter-spacing:0.668px;">Obyčejný text v cyklu</span>
<svg class="a" style="left:0;top:0" width="1164" height="720" viewBox="0 0 1164 720">
<path d="M342,214 V220.2 H348.6" fill="none" stroke="#555" stroke-width="1.8"/>
<g fill="#fff" stroke="#8a8a8a" stroke-width="1"><path d="M413.5,206.5 H424 L418.75,214.5 Z"/><path d="M413.5,223.5 L418.75,214.5 L424,223.5 Z"/><rect x="413.5" y="224.5" width="10.5" height="7"/></g>
<path d="M760,224.5 V221 L765,215.8 L770,221 V224.5 Z" fill="#fff" stroke="#8a8a8a" stroke-width="1"/>
<rect x="425" y="280.6" width="3.4" height="2.2" fill="#666" />
<rect x="425" y="284.8" width="3.4" height="2.2" fill="#666" />
<rect x="425" y="289" width="3.4" height="2.2" fill="#666" />
<rect x="425" y="293.2" width="3.4" height="2.2" fill="#666" />
<rect x="425" y="315" width="3.4" height="2.2" fill="#5f7aa6" />
<rect x="425" y="319" width="3.4" height="2.2" fill="#5f7aa6" />
<rect x="425" y="323" width="3.4" height="2.2" fill="#5f7aa6" />
<rect x="425" y="327" width="3.4" height="2.2" fill="#5f7aa6" />
</svg>
<div class="a" style="left:847.5px;top:202px;width:1px;height:487px;background:#cfcfcf;"></div>
<div class="a" style="left:856.7px;top:254px;width:294.3px;height:426px;background:#fff;"></div>
<span class="t" style="left:865px;top:222.19px;font:26px/1 'Liberation Sans',sans-serif;color:#4a78b8;letter-spacing:-0.042px;">Informační panel</span>
<div class="a" style="left:866.8px;top:263.7px;width:276.4px;height:193.5px;border:4.5px solid #fdd20a;"></div>
<span class="t" style="left:874.4px;top:270.46px;font:13.4px/1 'Liberation Sans',sans-serif;color:#000;letter-spacing:0.001px;">Navigace:</span>
<span class="t" style="left:877.5px;top:289.66px;font:13.4px/1 'Liberation Sans',sans-serif;color:#0000ee;letter-spacing:-0.184px;text-decoration:underline;">Cyklus</span>
<span class="t" style="left:930px;top:291.29px;font:bold 11px/1 'Liberation Sans',sans-serif;color:#333;">»</span>
<span class="t" style="left:950.2px;top:289.66px;font:bold 13.4px/1 'Liberation Sans',sans-serif;color:#0000ee;letter-spacing:0.283px;text-decoration:underline;">Podmínka</span>
<div class="a" style="left:876px;top:324.2px;width:236.4px;height:113px;border:1px solid #dcdcdc;"></div>
<div class="a" style="left:883px;top:316px;width:138px;height:16px;background:#fff;"></div>
<span class="t" style="left:886px;top:316.75px;font:14px/1 'Liberation Sans',sans-serif;color:#222;letter-spacing:0.354px;">Vlastnosti podmínky</span>
<div class="a" style="left:1092.8px;top:304px;width:37.8px;height:37.8px;background:#fff;border:6px solid #ec1c24;"></div>
<div class="a" style="left:950px;top:339.2px;width:155.2px;height:27px;background:#fff;border:1px solid #7a7a7a;"></div>
<div class="a" style="left:950px;top:372.2px;width:153.6px;height:25.2px;background:#fff;border:1px solid #7a7a7a;"></div>
<div class="a" style="left:950px;top:404.8px;width:153.6px;height:26.2px;background:#fff;border:1px solid #7a7a7a;"></div>
<span class="t" style="left:885px;top:345.15px;font:14px/1 'Liberation Sans',sans-serif;color:#222;letter-spacing:-0.012px;">Položka:</span>
<span class="t" style="left:885px;top:377.15px;font:14px/1 'Liberation Sans',sans-serif;color:#222;letter-spacing:0.153px;">Opeátor:</span>
<span class="t" style="left:885px;top:409.85px;font:14px/1 'Liberation Sans',sans-serif;color:#222;letter-spacing:0.272px;">Hodnota:</span>
<span class="t" style="left:953.9px;top:345.06px;font:13.4px/1 'Liberation Sans',sans-serif;color:#000;width:149.6px;overflow:hidden;letter-spacing:-0.2px;">SpisSubjekt.Subjekt.Označení</span>
<span class="t" style="left:953.9px;top:377.66px;font:13.4px/1 'Liberation Sans',sans-serif;color:#000;letter-spacing:-0.199px;">obsahuje</span>
<span class="t" style="left:953.9px;top:410.06px;font:13.4px/1 'Liberation Sans',sans-serif;color:#000;letter-spacing:-0.040px;">Mgr.</span>
<svg class="a" style="left:0;top:0" width="1164" height="720" viewBox="0 0 1164 720">
<polygon points="1072.8,228.6 1084,228.6 1078.4,234.6" fill="#777"/>
<path d="M1125,226.4 L1136,237.2 M1136,226.4 L1125,237.2" stroke="#6a6a6a" stroke-width="2.8" fill="none"/>
<path d="M1087.8,383 L1092.8,387.8 L1097.8,383" fill="none" stroke="#444" stroke-width="1.2"/>
<defs><linearGradient id="rg" x1="0" y1="0" x2="0" y2="1"><stop offset="0" stop-color="#f6a59a"/><stop offset=".5" stop-color="#e4513f"/><stop offset="1" stop-color="#d43a28"/></linearGradient></defs>
<circle cx="1111.2" cy="323.8" r="9.6" fill="url(#rg)" stroke="#c8402e" stroke-width="1.2"/><rect x="1104.6" y="321.2" width="13.2" height="5" rx="1" fill="#fff"/>
</svg>
<div class="a" style="left:824.3px;top:689px;width:47.8px;height:26.8px;background:#c6c6c6;"></div>
<span class="t" style="left:14.8px;top:695.55px;font:14px/1 'Liberation Sans',sans-serif;color:#555555;letter-spacing:-0.307px;">Stránka 1 z 1</span>
<span class="t" style="left:120.5px;top:695.55px;font:14px/1 'Liberation Sans',sans-serif;color:#555555;letter-spacing:-0.257px;">2 z 12 slov</span>
<span class="t" style="left:263.6px;top:695.55px;font:14px/1 'Liberation Sans',sans-serif;color:#555555;letter-spacing:-0.181px;">Čeština</span>
<span class="t" style="left:1099px;top:695.17px;font:13.5px/1 'Liberation Sans',sans-serif;color:#555555;letter-spacing:-0.193px;">40 %</span>
<svg class="a" style="left:0;top:0" width="1164" height="720" viewBox="0 0 1164 720">
<g transform="translate(0,1.2)">
<g fill="none" stroke="#666" stroke-width="1.1"><path d="M223,696 H228 Q230,696 230,698 V709 Q230,707.4 228,707.4 H223 Z"/><path d="M230,698 Q230,696 232,696 H233.4"/></g><path d="M233.4,697.6 L238.6,703.6 M238.6,697.6 L233.4,703.6" stroke="#666" stroke-width="1.4"/><path d="M233,706.6 H238.6" stroke="#666" stroke-width="1.1"/>
<g transform="translate(0,-1.2)"><circle cx="338.2" cy="697.6" r="2.7" fill="#555"/><rect x="342.6" y="695.2" width="8" height="4.4" fill="#555"/><rect x="335.6" y="701.4" width="15" height="9.4" fill="#555"/><path d="M336.6,704.5 H349.6 M336.6,707.6 H349.6 M340.4,702.4 V709.8 M345.4,702.4 V709.8" stroke="#f2f2f2" stroke-width=".9"/></g>
<g fill="none" stroke="#666" stroke-width="1.1"><path d="M800.8,696.4 Q797,694 793,694.6 V706.4 Q797,705.8 800.8,708 Q804.6,705.8 808.8,706.4 V694.6 Q804.6,694 800.8,696.4 Z M800.8,696.4 V708"/><path d="M795,697.6 H798.6 M795,700.2 H798.6 M795,702.8 H798.6 M803,697.6 H806.6 M803,700.2 H806.6 M803,702.8 H806.6" stroke-width=".9"/></g>
<rect x="841.3" y="694" width="15" height="14" fill="#fff" stroke="#555" stroke-width="1.1"/><path d="M843.6,697.2 H854 M843.6,699.8 H854 M843.6,702.4 H854 M843.6,705 H854" stroke="#555" stroke-width="1"/>
<path d="M887.4,694 H900 V700 M887.4,694 V706.6 H895" fill="none" stroke="#666" stroke-width="1.1"/><path d="M889.6,697 H898 M889.6,699.6 H898 M889.6,702.2 H894" stroke="#666" stroke-width=".9"/><circle cx="900.4" cy="704.6" r="4" fill="#fff" stroke="#555" stroke-width="1.2"/><path d="M896.4,704.6 H904.4 M900.4,700.6 V708.6" stroke="#555" stroke-width=".8"/>
<path d="M926,702.4 H933" stroke="#555" stroke-width="1.8"/>
<line x1="939.2" y1="702.4" x2="1062.7" y2="702.4" stroke="#9a9a9a" stroke-width="1" />
<line x1="1001.2" y1="699.4" x2="1001.2" y2="705.4" stroke="#9a9a9a" stroke-width="1" />
<rect x="958.6" y="695.2" width="4.8" height="13.4" fill="#555" />
<path d="M1069,702.4 H1078.6 M1073.8,697.6 V707.2" stroke="#555" stroke-width="1.8"/>
</g>
</svg>
</body></html>
